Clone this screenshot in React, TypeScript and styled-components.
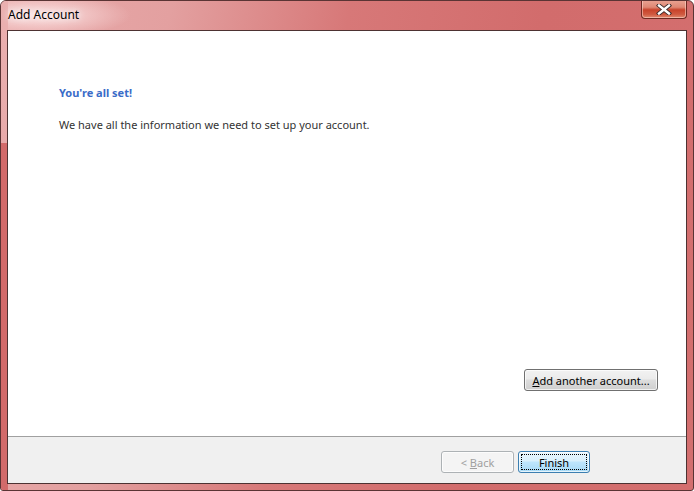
import styled, { createGlobalStyle } from 'styled-components';

const GlobalStyle = createGlobalStyle`
  html, body {
    margin: 0;
    padding: 0;
    background: #ffffff;
  }
  body {
    font-family: "Noto Sans", "Open Sans", sans-serif;
    font-size: 11px;
  }
`;

const Window = styled.div`
  width: 694px;
  height: 491px;
  box-sizing: border-box;
  display: flex;
  flex-direction: column;
  border: 1px solid #5a3434;
  border-radius: 6px 6px 3px 3px;
  background:
    radial-gradient(ellipse 90px 22px at 40px 14px, rgba(255, 235, 235, 0.85), rgba(255, 235, 235, 0) 100%),
    linear-gradient(100deg, #e9aaaa 0, #e3a0a0 22%, #d77878 45%, #d26c6c 70%, #d46f6f 100%);
  overflow: hidden;
  position: relative;
`;

// light reflection that runs down the left frame edge
const FrameSheen = styled.div`
  position: absolute;
  left: 0;
  top: 0;
  width: 7px;
  height: 142px;
  background: linear-gradient(180deg, #eab0b0, #e8aaaa);
`;

const FrameShade = styled.div`
  position: absolute;
  left: 0;
  top: 142px;
  bottom: 0;
  width: 7px;
  background: #d26a6a;
`;

const TitleBar = styled.div`
  height: 29px;
  display: flex;
  align-items: flex-start;
  justify-content: space-between;
  position: relative;
`;

const Title = styled.div`
  margin: 6px 0 0 7px;
  color: #000;
  font-size: 12px;
  line-height: 16px;
  text-shadow: 0 0 6px #fff, 0 0 10px #fff;
`;

const CloseButton = styled.div`
  width: 46px;
  height: 19px;
  margin: -1px 6px 0 0;
  box-sizing: border-box;
  border: 1px solid #6e2a22;
  border-top: none;
  border-radius: 0 0 4px 4px;
  background: linear-gradient(180deg, #eaa494 0, #df8874 40%, #c8432b 55%, #d05a40 80%, #e08a70 100%);
  box-shadow: inset 0 0 0 1px rgba(255, 220, 210, 0.55);
  display: flex;
  align-items: center;
  justify-content: center;
`;

const Client = styled.div`
  flex: 1;
  margin: 0 6px 6px 6px;
  border: 1px solid #4d3232;
  display: flex;
  flex-direction: column;
  background: #fff;
  position: relative;
`;

const Body = styled.div`
  flex: 1;
  display: flex;
  flex-direction: column;
  padding: 54px 28px 0 51px;
`;

const Heading = styled.div`
  color: #3a6cc8;
  font-weight: bold;
  font-size: 11px;
  line-height: 16px;
`;

const Message = styled.div`
  margin-top: 16px;
  color: #333;
  font-size: 11px;
  line-height: 16px;
`;

const BodyActions = styled.div`
  margin-top: auto;
  margin-bottom: 45px;
  display: flex;
  justify-content: flex-end;
`;

const Footer = styled.div`
  height: 47px;
  box-sizing: border-box;
  border-top: 1px solid #a0a0a0;
  background: #f0f0f0;
  display: flex;
  justify-content: flex-end;
  align-items: flex-start;
  gap: 4px;
  padding: 14px 96px 0 0;
`;

const Button = styled.button<{ $width: number; $default?: boolean }>`
  width: ${p => p.$width}px;
  height: 22px;
  padding: 0;
  box-sizing: border-box;
  font-family: "Noto Sans", "Open Sans", sans-serif;
  font-size: 11px;
  color: #000;
  border-radius: 3px;
  border: 1px solid ${p => (p.$default ? '#3c7fb1' : '#707070')};
  background: ${p =>
    p.$default
      ? 'linear-gradient(180deg, #eaf6fd 0, #d9f0fc 45%, #bee6fd 50%, #a7d9f5 100%)'
      : 'linear-gradient(180deg, #f2f2f2 0, #ebebeb 45%, #dddddd 50%, #cfcfcf 100%)'};
  box-shadow: inset 0 0 0 1px rgba(255, 255, 255, 0.7);
  position: relative;
  cursor: default;

  &:disabled {
    color: #a0a0a0;
    border-color: #adb2b5;
    background: #f4f4f4;
    box-shadow: inset 0 0 0 1px #fcfcfc;
  }
`;

// dotted keyboard focus ring drawn inside the default button
const FocusRing = styled.span`
  position: absolute;
  inset: 2px;
  border: 1px dotted #000;
  pointer-events: none;
`;

const Mnemonic = styled.span`
  text-decoration: underline;
`;

const CloseGlyph = () => (
  <svg width="16" height="11" viewBox="0 0 16 11">
    <path
      d="M3 1.5 L13 9.5 M13 1.5 L3 9.5"
      stroke="#3a2a2a"
      strokeWidth="4.2"
      strokeLinecap="square"
      fill="none"
    />
    <path
      d="M3 1.5 L13 9.5 M13 1.5 L3 9.5"
      stroke="#ffffff"
      strokeWidth="2.4"
      strokeLinecap="square"
      fill="none"
    />
  </svg>
);

export default function App() {
  return (
    <>
      <GlobalStyle />
      <Window>
        <FrameSheen />
        <FrameShade />
        <TitleBar>
          <Title>Add Account</Title>
          <CloseButton>
            <CloseGlyph />
          </CloseButton>
        </TitleBar>
        <Client>
          <Body>
            <Heading>You're all set!</Heading>
            <Message>We have all the information we need to set up your account.</Message>
            <BodyActions>
              <Button $width={134}>
                <Mnemonic>A</Mnemonic>dd another account...
              </Button>
            </BodyActions>
          </Body>
          <Footer>
            <Button $width={73} disabled>
              &lt; <Mnemonic>B</Mnemonic>ack
            </Button>
            <Button $width={72} $default>
              Finish
              <FocusRing />
            </Button>
          </Footer>
        </Client>
      </Window>
    </>
  );
}
